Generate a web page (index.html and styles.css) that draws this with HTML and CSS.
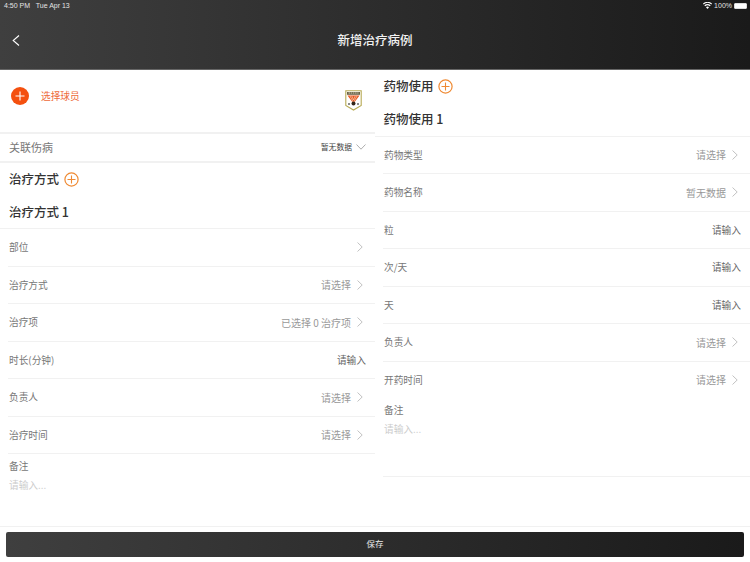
FILE: index.html
```html
<!DOCTYPE html>
<html lang="zh">
<head>
<meta charset="utf-8">
<title>新增治疗病例</title>
<link rel="stylesheet" href="styles.css">
</head>
<body>
<div class="app">
  <header class="header">
    <div class="status">
      <span class="status-time">4:50 PM&nbsp;&nbsp; Tue Apr 13</span>
      <span class="status-right">
        <svg class="wifi" width="9" height="7" viewBox="0 0 18 14"><path d="M9 14 6 10.500a4.600 4.600 0 0 1 6 0Z" fill="#fff"/><path d="M4.400 8.600a7 7 0 0 1 9.200 0l1.700-2a9.700 9.700 0 0 0-12.600 0ZM1.200 5a12 12 0 0 1 15.600 0l1.200-1.800a14.400 14.400 0 0 0-18 0Z" fill="#fff"/></svg>
        <span>100%</span>
        <span class="battery"><span class="battery-fill"></span></span>
      </span>
    </div>
    <div class="nav">
      <svg class="back" width="8" height="11" viewBox="0 0 8 11"><path d="M7 .5 1.200 5.500 7 10.500" fill="none" stroke="#fff" stroke-width="1.100"/></svg>
      <h1 class="nav-title">新增治疗病例</h1>
    </div>
  </header>

  <main class="columns">
    <section class="col col-left">
      <div class="player">
        <svg class="add-solid" width="18" height="18" viewBox="0 0 18 18"><circle cx="9" cy="9" r="9" fill="#f4500f"/><path d="M9 4.500v9M4.500 9h9" stroke="#fff" stroke-width="1.100"/></svg>
        <span class="player-label">选择球员</span>
        <svg class="crest" width="17" height="21" viewBox="0 0 17 21"><path d="M.8.800h15.400v14.700L8.500 20 .8 15.500Z" fill="#fff" stroke="#b8ab55" stroke-width="1.100"/><path d="M2 2h13v2.800H2Z" fill="#6b6347"/><path d="M3.500 3h10" stroke="#e9e6d6" stroke-width=".8" stroke-dasharray="1.500 .7"/><path d="M2.500 5.500h12L8.500 13.500Z" fill="#e8541c"/><path d="M5 6l3.500 6.500L12 6M6.800 6l1.700 4 1.700-4" fill="none" stroke="#f6d3b8" stroke-width=".7"/><circle cx="8.500" cy="13.500" r="2" fill="#33261a"/><circle cx="4" cy="14" r="1" fill="#666"/><circle cx="13" cy="14" r="1" fill="#666"/></svg>
      </div>
      <div class="injury">
        <span class="injury-label">关联伤病</span>
        <span class="injury-value">暂无数据</span>
        <svg class="chev-down" width="10" height="6" viewBox="0 0 10 6"><path d="M.5.500 5 5.200 9.500.500" fill="none" stroke="#999" stroke-width=".8"/></svg>
      </div>
      <h2 class="section-title section-title-left">治疗方式
        <svg class="add-line" width="15" height="15" viewBox="0 0 15 15"><circle cx="7.500" cy="7.500" r="6.600" fill="none" stroke="#ef8a33" stroke-width="1.200"/><path d="M7.500 3.500v8M3.500 7.500h8" stroke="#ef8a33" stroke-width="1.100"/></svg>
      </h2>
      <h3 class="sub-title">治疗方式 1</h3>
      <div class="row row-first"><span class="row-label">部位</span><svg class="chev" width="6" height="10" viewBox="0 0 6 10"><path d="M.5.500 5.200 5 .5 9.500" fill="none" stroke="#bbb" stroke-width=".9"/></svg></div>
      <div class="row"><span class="row-label">治疗方式</span><span class="row-value">请选择</span><svg class="chev" width="6" height="10" viewBox="0 0 6 10"><path d="M.5.500 5.200 5 .5 9.500" fill="none" stroke="#bbb" stroke-width=".9"/></svg></div>
      <div class="row"><span class="row-label">治疗项</span><span class="row-value">已选择 0 治疗项</span><svg class="chev" width="6" height="10" viewBox="0 0 6 10"><path d="M.5.500 5.200 5 .5 9.500" fill="none" stroke="#bbb" stroke-width=".9"/></svg></div>
      <div class="row row-input"><span class="row-label">时长(分钟)</span><span class="row-input-value">请输入</span></div>
      <div class="row"><span class="row-label">负责人</span><span class="row-value">请选择</span><svg class="chev" width="6" height="10" viewBox="0 0 6 10"><path d="M.5.500 5.200 5 .5 9.500" fill="none" stroke="#bbb" stroke-width=".9"/></svg></div>
      <div class="row"><span class="row-label">治疗时间</span><span class="row-value">请选择</span><svg class="chev" width="6" height="10" viewBox="0 0 6 10"><path d="M.5.500 5.200 5 .5 9.500" fill="none" stroke="#bbb" stroke-width=".9"/></svg></div>
      <div class="note note-left"><div class="note-label">备注</div><div class="note-placeholder">请输入...</div></div>
    </section>

    <section class="col col-right">
      <h2 class="section-title section-title-right">药物使用
        <svg class="add-line" width="15" height="15" viewBox="0 0 15 15"><circle cx="7.500" cy="7.500" r="6.600" fill="none" stroke="#ef8a33" stroke-width="1.200"/><path d="M7.500 3.500v8M3.500 7.500h8" stroke="#ef8a33" stroke-width="1.100"/></svg>
      </h2>
      <h3 class="sub-title sub-title-right">药物使用 1</h3>
      <div class="row row-first"><span class="row-label">药物类型</span><span class="row-value">请选择</span><svg class="chev" width="6" height="10" viewBox="0 0 6 10"><path d="M.5.500 5.200 5 .5 9.500" fill="none" stroke="#bbb" stroke-width=".9"/></svg></div>
      <div class="row"><span class="row-label">药物名称</span><span class="row-value">暂无数据</span><svg class="chev" width="6" height="10" viewBox="0 0 6 10"><path d="M.5.500 5.200 5 .5 9.500" fill="none" stroke="#bbb" stroke-width=".9"/></svg></div>
      <div class="row row-input"><span class="row-label">粒</span><span class="row-input-value">请输入</span></div>
      <div class="row row-input"><span class="row-label">次/天</span><span class="row-input-value">请输入</span></div>
      <div class="row row-input"><span class="row-label">天</span><span class="row-input-value">请输入</span></div>
      <div class="row"><span class="row-label">负责人</span><span class="row-value">请选择</span><svg class="chev" width="6" height="10" viewBox="0 0 6 10"><path d="M.5.500 5.200 5 .5 9.500" fill="none" stroke="#bbb" stroke-width=".9"/></svg></div>
      <div class="row"><span class="row-label">开药时间</span><span class="row-value">请选择</span><svg class="chev" width="6" height="10" viewBox="0 0 6 10"><path d="M.5.500 5.200 5 .5 9.500" fill="none" stroke="#bbb" stroke-width=".9"/></svg></div>
      <div class="note note-right"><div class="note-label">备注</div><div class="note-placeholder">请输入...</div></div>
    </section>
  </main>

  <footer class="footer"><button class="save" type="button">保存</button></footer>
</div>
</body>
</html>
```
FILE: styles.css
```css
* { box-sizing: border-box; }
html, body { margin: 0; padding: 0; }
body {
  width: 750px;
  height: 562px;
  overflow: hidden;
  background: #fff;
  font-family: "Noto Sans CJK SC", "Liberation Sans", sans-serif;
  color: #777;
}
.app { display: flex; flex-direction: column; height: 562px; }

.header {
  height: 70px;
  flex: none;
  background: linear-gradient(90deg, #3f3f3f 0%, #1a1a1a 100%);
  border-bottom: 1px solid #666;
  color: #fff;
}
.status {
  height: 11px;
  padding: 0 3px 0 4px;
  display: flex;
  justify-content: space-between;
  align-items: center;
  font-family: "Liberation Sans", sans-serif;
  font-size: 7px;
  color: #e4e4e4;
}
.status-right { display: flex; align-items: center; gap: 2px; }
.battery {
  width: 13px;
  height: 6px;
  border: 1px solid #ddd;
  border-radius: 1px;
  display: flex;
}
.battery-fill { flex: 1; background: #fff; }
.nav {
  height: 58px;
  position: relative;
  display: flex;
  align-items: center;
  justify-content: center;
}
.back { position: absolute; left: 12px; top: 24px; }
.nav-title {
  margin: 0 0 2px;
  font-size: 12.500px;
  font-weight: 500;
  color: #f2f2f2;
}

.columns { flex: 1; display: flex; min-height: 0; }
.col { width: 375px; flex: none; }

.player {
  height: 64px;
  padding: 17px 13px 0 11px;
  display: flex;
  align-items: flex-start;
  border-bottom: 2px solid #f1f1f1;
}
.player-label {
  margin: 0 0 0 12px;
  font-size: 9.700px;
  line-height: 18px;
  color: #ee6a3a;
  flex: 1;
}
.crest { margin-top: 3px; }

.injury {
  height: 29px;
  display: flex;
  align-items: center;
  padding: 0 9px 2px 9px;
  border-bottom: 2px solid #f1f1f1;
}
.injury-label { font-size: 11px; flex: 1; color: #777; }
.injury-value { font-size: 7.800px; color: #444; margin-right: 4px; }

.section-title {
  margin: 0;
  font-size: 12.500px;
  font-weight: 500;
  color: #333;
  display: flex;
  align-items: center;
  gap: 4.500px;
  padding-left: 9px;
}
.section-title-left { height: 32px; padding-bottom: 1px; }
.section-title-right { height: 32.500px; padding: 0 0 1px 8.500px; }
.add-line { margin-top: 1px; }
.sub-title {
  margin: 0;
  height: 33px;
  display: flex;
  align-items: center;
  padding: 0 0 1px 9px;
  font-size: 12.500px;
  font-weight: 500;
  color: #333;
}
.sub-title-right { padding-left: 8.500px; }

.row {
  height: 37.500px;
  margin-left: 8px;
  padding: 0 12px 0 1px;
  display: flex;
  align-items: center;
  border-top: 1px solid #f1f1f1;
}
.row-first { margin-left: 0; padding-left: 9px; }
.row-label { font-size: 9.700px; flex: 1; color: #777; }
.row-value { font-size: 10px; color: #999; margin-right: 6px; }
.row-input-value { font-size: 9.700px; color: #666; }
.row-input { padding-right: 9px; }

.note { margin-left: 8px; padding: 5px 1px 0; }
.note-left { height: 74px; border-top: 1px solid #f1f1f1; }
.note-right { height: 78.500px; border-bottom: 1px solid #f1f1f1; }
.note-label { font-size: 9.700px; line-height: 14px; color: #777; }
.note-placeholder { font-size: 9.700px; line-height: 14px; margin-top: 5px; color: #ccc; }

.footer {
  height: 36px;
  flex: none;
  border-top: 1px solid #f1f1f1;
  padding: 5px 6px 0;
}
.save {
  display: block;
  width: 738px;
  height: 24.500px;
  border: 0;
  border-radius: 2px;
  padding: 0 0 2px;
  background: linear-gradient(90deg, #3f3f3f 0%, #1a1a1a 100%);
  color: #e8e8e8;
  font-family: inherit;
  font-size: 8.500px;
}
```
